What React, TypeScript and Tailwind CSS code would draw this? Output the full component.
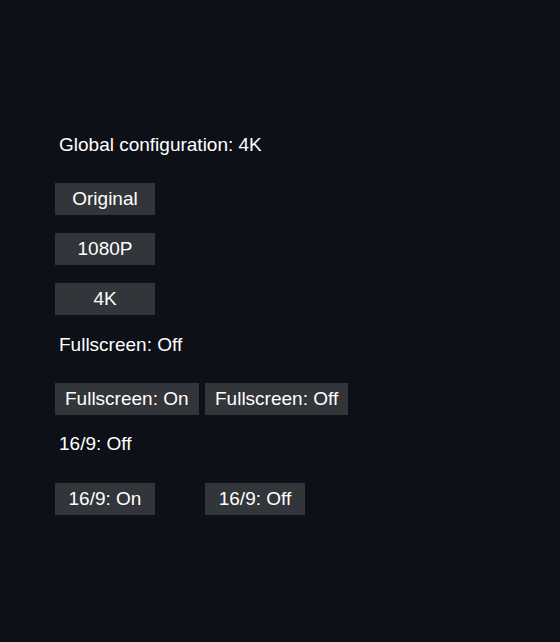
const font = { fontFamily: '"Liberation Sans", Arial, sans-serif' };

type BtnProps = { label: string };

const Btn = ({ label }: BtnProps) => (
  <button className="h-[32px] min-w-[100px] px-[10px] bg-[#323539] text-[19px] leading-[32px] text-white text-center">
    {label}
  </button>
);

const Label = ({ text }: { text: string }) => (
  <p className="pl-[4px] h-[20px] text-[19px] leading-[20px] text-white">{text}</p>
);

export default function App() {
  return (
    <div className="min-h-[642px] w-[560px] bg-[#0d1017] pt-[135px] pl-[55px]" style={font}>
      <Label text="Global configuration: 4K" />
      <div className="mt-[28px] flex flex-col items-start gap-[18px]">
        <Btn label="Original" />
        <Btn label="1080P" />
        <Btn label="4K" />
      </div>

      <div className="mt-[20px]">
        <Label text="Fullscreen: Off" />
      </div>
      <div className="mt-[28px] flex">
        <div className="w-[150px]">
          <Btn label="Fullscreen: On" />
        </div>
        <Btn label="Fullscreen: Off" />
      </div>

      <div className="mt-[19px]">
        <Label text="16/9: Off" />
      </div>
      <div className="mt-[29px] flex">
        <div className="w-[150px]">
          <Btn label="16/9: On" />
        </div>
        <Btn label="16/9: Off" />
      </div>
    </div>
  );
}
